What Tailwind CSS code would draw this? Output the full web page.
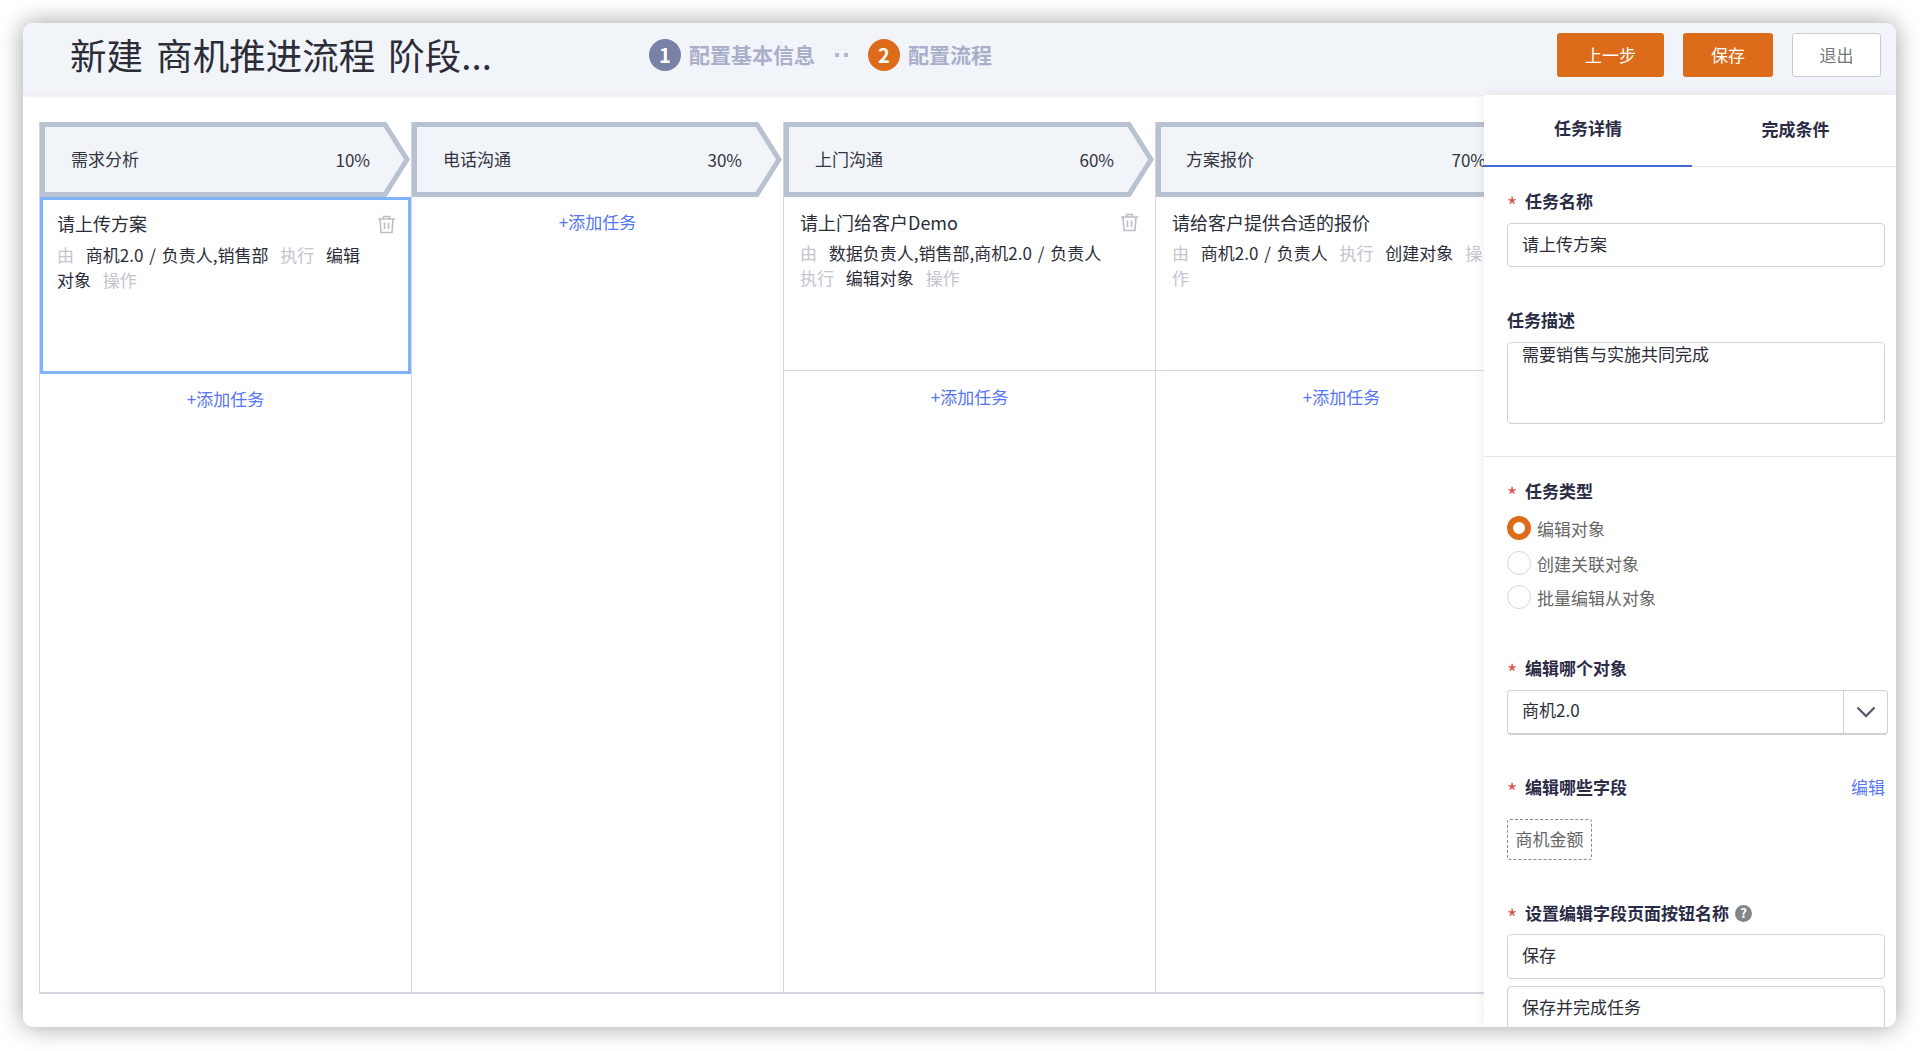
<!DOCTYPE html>
<html lang="zh">
<head>
<meta charset="utf-8">
<script src="https://cdn.jsdelivr.net/npm/@tailwindcss/browser@4"></script>
</head>
<body class="bg-white font-['Noto_Sans_CJK_SC','Noto_Sans',sans-serif] text-[#33343f] overflow-hidden">
<div class="w-[1920px] h-[1051px] pt-[23px] pl-[23px] overflow-hidden">
  <div class="relative w-[1873px] h-[1004px] rounded-[10px] bg-white shadow-[0_0_24px_rgba(0,0,0,0.38)]">
    <div class="absolute inset-0 rounded-[10px] overflow-hidden">
      <!-- top bar -->
      <header class="relative z-10 h-[72px] pb-[8px] bg-[#f1f4f9] shadow-[0_1px_3px_rgba(0,0,0,0.1)] flex items-center">
        <h1 class="ml-[47px] w-[560px] text-[36.500px] leading-[44px] text-[#2c2d38] whitespace-pre [word-spacing:5px]">新建 商机推进流程 阶段...</h1>
        <div class="ml-[19px] flex items-center text-[21px] font-semibold text-[#a9afc9]">
          <span class="w-8 h-8 rounded-full bg-[#7a81a6] text-white flex items-center justify-center text-[20px] font-bold">1</span>
          <span class="ml-[8px]">配置基本信息</span>
          <span class="ml-[20px] flex gap-[5px]"><i class="block w-1 h-1 bg-[#b4bace]"></i><i class="block w-1 h-1 bg-[#b4bace]"></i></span>
          <span class="ml-[20px] w-8 h-8 rounded-full bg-[#dc6c1a] text-white flex items-center justify-center text-[20px] font-bold">2</span>
          <span class="ml-[8px]">配置流程</span>
        </div>
        <div class="ml-auto mr-[15px] flex items-center">
          <button class="w-[107px] h-[44px] rounded-[3px] bg-[#dc6c1a] text-white text-[17px]">上一步</button>
          <button class="ml-[19px] w-[90px] h-[44px] rounded-[3px] bg-[#dc6c1a] text-white text-[17px]">保存</button>
          <button class="ml-[19px] w-[89px] h-[44px] rounded-[3px] bg-white border border-[#cccccc] text-[#777] text-[17px]">退出</button>
        </div>
      </header>

      <!-- stage board -->
      <div class="mt-[27px] ml-[16px] h-[872px] w-[1900px] flex border-b-2 border-[#d5d5df] overflow-hidden">

        <section class="w-[372px] shrink-0 border-l border-[#d5d5df]">
          <div class="relative h-[75px] flex items-center text-[17px]">
            <svg class="absolute inset-0" width="372" height="75" viewBox="0 0 372 75"><path d="M2.5 2.5H345L367 37.5L345 72.5H2.500Z" fill="#f1f4f9" stroke="#b9c2d3" stroke-width="5"/></svg>
            <span class="relative ml-[31px] -mt-[2px]">需求分析</span><span class="relative ml-auto mr-[41px] mt-[1px]">10%</span>
          </div>
          <div class="relative h-[177px] border-[3px] border-[#7fb3ff] pl-[14px] pr-[14px] pt-[9px]">
            <div class="text-[18px] leading-[28px] text-[#2c2d38]">请上传方案</div>
            <p class="w-[314px] mt-[5px] text-[17px] leading-[25px] text-[#2c2d38] [word-spacing:8px]"><span class="text-[#c3c5cf]">由</span> <span class="[word-spacing:2px]">商机2.0 / 负责人,销售部</span> <span class="text-[#c3c5cf]">执行</span> 编辑对象 <span class="text-[#c3c5cf]">操作</span></p>
            <svg class="absolute right-[12px] top-[15px]" width="19" height="19" viewBox="0 0 19 19" fill="none" stroke="#bdbfc6" stroke-width="1.6"><path d="M1 4H18M6.500 4V1.500H12.500V4M3 4L4 17.500H15L16 4M7.500 7.500V14M11.500 7.500V14"/></svg>
          </div>
          <div class="mt-[13px] text-center text-[17px] leading-[24px] text-[#5475f5]">+添加任务</div>
        </section>

        <section class="w-[372px] shrink-0 border-l border-[#d5d5df]">
          <div class="relative h-[75px] flex items-center text-[17px]">
            <svg class="absolute inset-0" width="372" height="75" viewBox="0 0 372 75"><path d="M2.5 2.5H345L367 37.5L345 72.5H2.500Z" fill="#f1f4f9" stroke="#b9c2d3" stroke-width="5"/></svg>
            <span class="relative ml-[31px] -mt-[2px]">电话沟通</span><span class="relative ml-auto mr-[41px] mt-[1px]">30%</span>
          </div>
          <div class="mt-[13px] text-center text-[17px] leading-[24px] text-[#5475f5]">+添加任务</div>
        </section>

        <section class="w-[372px] shrink-0 border-l border-[#d5d5df]">
          <div class="relative h-[75px] flex items-center text-[17px]">
            <svg class="absolute inset-0" width="372" height="75" viewBox="0 0 372 75"><path d="M2.5 2.5H345L367 37.5L345 72.5H2.500Z" fill="#f1f4f9" stroke="#b9c2d3" stroke-width="5"/></svg>
            <span class="relative ml-[31px] -mt-[2px]">上门沟通</span><span class="relative ml-auto mr-[41px] mt-[1px]">60%</span>
          </div>
          <div class="relative h-[174px] border-b border-[#d5d5df] pl-[16px] pt-[11px]">
            <div class="text-[18px] leading-[28px] text-[#2c2d38]">请上门给客户Demo</div>
            <p class="w-[314px] mt-[4px] text-[17px] leading-[25px] text-[#2c2d38] [word-spacing:8px]"><span class="text-[#c3c5cf]">由</span> <span class="[word-spacing:2px]">数据负责人,销售部,商机2.0 / 负责人</span> <span class="text-[#c3c5cf]">执行</span> 编辑对象 <span class="text-[#c3c5cf]">操作</span></p>
            <svg class="absolute right-[16px] top-[16px]" width="19" height="19" viewBox="0 0 19 19" fill="none" stroke="#bdbfc6" stroke-width="1.6"><path d="M1 4H18M6.500 4V1.500H12.500V4M3 4L4 17.500H15L16 4M7.500 7.500V14M11.500 7.500V14"/></svg>
          </div>
          <div class="mt-[14px] text-center text-[17px] leading-[24px] text-[#5475f5]">+添加任务</div>
        </section>

        <section class="w-[372px] shrink-0 border-l border-[#d5d5df]">
          <div class="relative h-[75px] flex items-center text-[17px]">
            <svg class="absolute inset-0" width="372" height="75" viewBox="0 0 372 75"><path d="M2.5 2.5H345L367 37.5L345 72.5H2.500Z" fill="#f1f4f9" stroke="#b9c2d3" stroke-width="5"/></svg>
            <span class="relative ml-[30px] -mt-[2px]">方案报价</span><span class="relative ml-auto mr-[41px] mt-[1px]">70%</span>
          </div>
          <div class="relative h-[174px] border-b border-[#d5d5df] pl-[16px] pt-[11px]">
            <div class="text-[18px] leading-[28px] text-[#2c2d38]">请给客户提供合适的报价</div>
            <p class="w-[314px] mt-[4px] text-[17px] leading-[25px] text-[#2c2d38] [word-spacing:8px]"><span class="text-[#c3c5cf]">由</span> <span class="[word-spacing:2px]">商机2.0 / 负责人</span> <span class="text-[#c3c5cf]">执行</span> 创建对象 <span class="text-[#c3c5cf]">操作</span></p>
          </div>
          <div class="mt-[14px] text-center text-[17px] leading-[24px] text-[#5475f5]">+添加任务</div>
        </section>
      </div>

      <!-- right detail panel, overlays the board -->
      <aside class="absolute z-20 top-[72px] right-0 bottom-0 w-[412px] bg-white shadow-[0_0_12px_rgba(0,0,0,0.08)] overflow-hidden">
        <div class="h-[72px] flex border-b border-[#e4e5ea] text-[17px] font-bold text-[#2a2b45]">
          <div class="w-[208px] h-[72px] border-b-2 border-[#4169d8] flex items-center justify-center pb-[4px]">任务详情</div>
          <div class="flex-1 flex items-center justify-center pb-[4px] pl-[3px]">完成条件</div>
        </div>

        <div class="pl-[23px] pr-[11px]">
          <div class="mt-[22px] flex items-center h-6 text-[17px] font-bold text-[#2a2b45]"><span class="w-[18px] text-[22px] pt-[6px] text-[#d9534f] font-normal">*</span>任务名称</div>
          <div class="mt-[10px] h-[44px] border border-[#cfd0d6] rounded-[4px] pl-[14px] pb-[3px] flex items-center text-[17px] text-[#2c2d38]">请上传方案</div>
          <div class="mt-[41px] h-6 flex items-center text-[17px] font-bold text-[#2a2b45]">任务描述</div>
          <div class="mt-[10px] h-[82px] border border-[#cfd0d6] rounded-[4px] pl-[14px] leading-[21px] text-[17px] text-[#2c2d38]">需要销售与实施共同完成</div>
        </div>

        <div class="mt-[32px] border-b border-[#e4e5ea]"></div>

        <div class="pl-[23px] pr-[11px]">
          <div class="mt-[22px] flex items-center h-6 text-[17px] font-bold text-[#2a2b45]"><span class="w-[18px] text-[22px] pt-[6px] text-[#d9534f] font-normal">*</span>任务类型</div>
          <div class="mt-[13px] flex items-center h-6 text-[17px] text-[#666]"><span class="w-6 h-6 rounded-full border-[6px] border-[#dc6c1a] bg-white mr-[6px]"></span><span class="mt-[2px]">编辑对象</span></div>
          <div class="mt-[11px] flex items-center h-6 text-[17px] text-[#666]"><span class="w-6 h-6 rounded-full border border-[#d5d5df] bg-white mr-[6px]"></span><span class="mt-[2px]">创建关联对象</span></div>
          <div class="mt-[10px] flex items-center h-6 text-[17px] text-[#666]"><span class="w-6 h-6 rounded-full border border-[#d5d5df] bg-white mr-[6px]"></span><span class="mt-[2px]">批量编辑从对象</span></div>

          <div class="mt-[47px] flex items-center h-6 text-[17px] font-bold text-[#2a2b45]"><span class="w-[18px] text-[22px] pt-[6px] text-[#d9534f] font-normal">*</span>编辑哪个对象</div>
          <div class="mt-[10px] -mr-[3px] h-[45px] border border-[#cfd0d6] border-b-2 rounded-[4px] flex text-[17px] text-[#2c2d38]">
            <div class="flex-1 pl-[14px] pb-[4px] flex items-center">商机2.0</div>
            <div class="w-[44px] border-l border-[#cfd0d6] flex items-center justify-center"><svg width="20" height="12" viewBox="0 0 20 12" fill="none" stroke="#5a5d72" stroke-width="2.400"><path d="M1.500 1.500L10 10L18.500 1.500"/></svg></div>
          </div>

          <div class="mt-[40px] flex items-center h-6 text-[17px] font-bold text-[#2a2b45]"><span class="w-[18px] text-[22px] pt-[6px] text-[#d9534f] font-normal">*</span>编辑哪些字段<span class="ml-auto font-normal text-[#5878f0]">编辑</span></div>
          <div class="mt-[20px] w-[85px] h-[41px] border border-dashed border-[#8a8a8a] rounded-[3px] flex items-center justify-center pb-[2px] text-[17px] text-[#666]">商机金额</div>

          <div class="mt-[41px] flex items-center h-6 text-[17px] font-bold text-[#2a2b45]"><span class="w-[18px] text-[22px] pt-[6px] text-[#d9534f] font-normal">*</span>设置编辑字段页面按钮名称<span class="ml-[6px] w-[17px] h-[17px] rounded-full bg-[#858585] text-white text-[13px] font-bold flex items-center justify-center">?</span></div>
          <div class="mt-[9px] h-[45px] border border-[#cfd0d6] rounded-[4px] pl-[14px] pb-[3px] flex items-center text-[17px] text-[#2c2d38]">保存</div>
          <div class="mt-[7px] h-[45px] border border-[#cfd0d6] rounded-[4px] pl-[14px] pb-[3px] flex items-center text-[17px] text-[#2c2d38]">保存并完成任务</div>
        </div>
      </aside>
    </div>
  </div>
</div>
</body>
</html>
